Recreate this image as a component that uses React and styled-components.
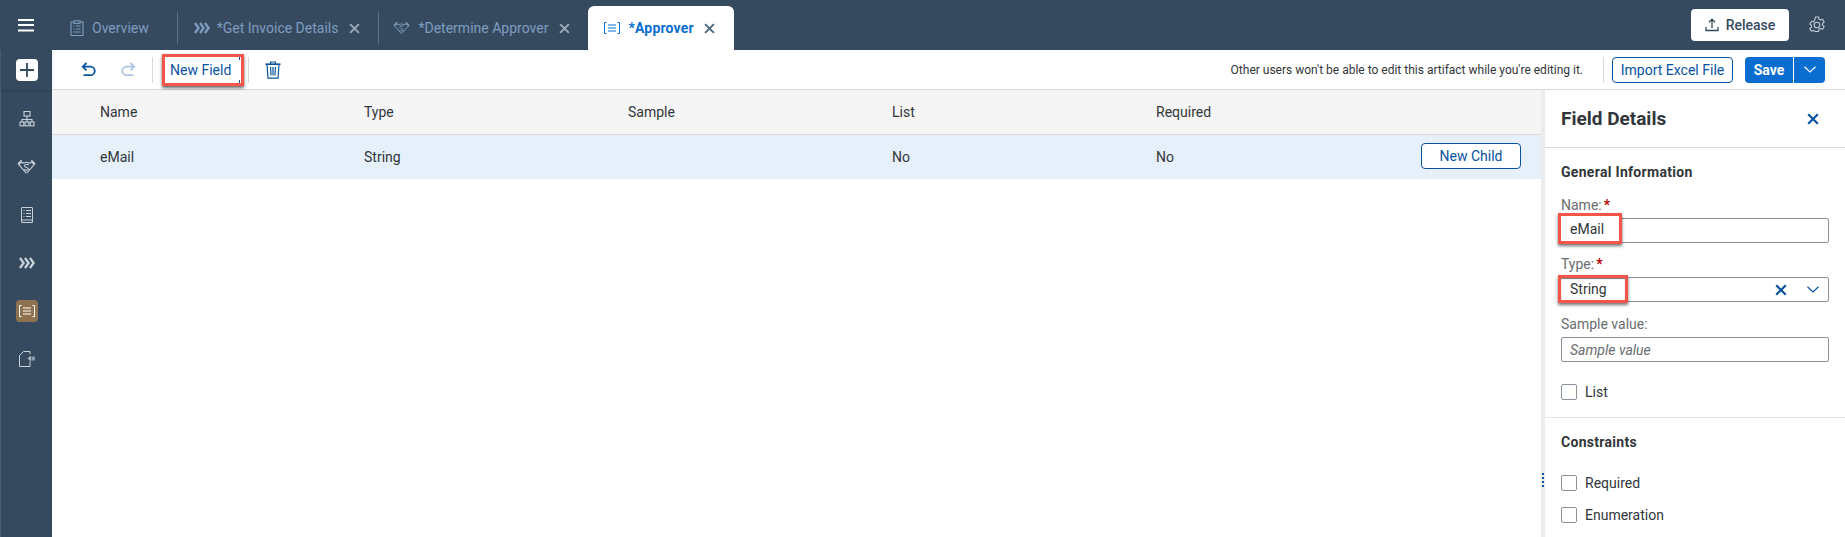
import React from 'react'
import styled, { createGlobalStyle } from 'styled-components'

const GlobalStyle = createGlobalStyle`
  html, body {
    margin: 0;
    padding: 0;
    background: #fff;
    font-family: "Roboto", "Liberation Sans", sans-serif;
  }
`

const HierarchyIcon = () => (
  <svg width="16" height="16" viewBox="0 0 16 16" fill="none" stroke="currentColor" strokeWidth="1.1">
    <rect x="5" y="0.5" width="6" height="4.5" />
    <path d="M8 5v3.5M3 11V8.5h10V11M8 8.5V11" />
    <rect x="1" y="11" width="3.8" height="3.8" />
    <rect x="6.1" y="11" width="3.8" height="3.8" />
    <rect x="11.2" y="11" width="3.8" height="3.8" />
  </svg>
)

const HandshakeIcon = ({ size = 19 }) => (
  <svg width={size} height={size * 0.8} viewBox="0 0 20 16" fill="none" stroke="currentColor" strokeWidth="1.1">
    <path d="M1 5.5L5 1.5M19 5.5L15 1.5" strokeWidth="1.8" />
    <path d="M4 3.5C6 5 8 3.5 10 3.5S14 5 16 3.5L18 6l-7 8q-1 1-2 0L2 6z" />
    <path d="M12.5 6.5C11 5 7.5 5.5 8 7.5S12 8.5 12 10.5c0 1.5-3 1.5-4.5.5" />
  </svg>
)

const ListDocIcon = () => (
  <svg width="16" height="16" viewBox="0 0 16 16" fill="none" stroke="currentColor" strokeWidth="1">
    <rect x="2.5" y="0.5" width="11" height="15" rx="0.5" />
    <path d="M4.5 3.5h1M7 3.5h5M4.5 6.5h1M7 6.5h5M4.5 9.5h1M7 9.5h5" />
    <path d="M2.5 13h11" />
  </svg>
)

const ChevronsIcon = ({ size = 16 }) => (
  <svg width={size} height={size} viewBox="0 0 16 16" fill="none" stroke="currentColor" strokeWidth="2.3">
    <path d="M1 3l3.6 5L1 13M6 3l3.6 5L6 13M11 3l3.6 5L11 13" />
  </svg>
)

const BracketListIcon = ({ size = 16 }) => (
  <svg width={size} height={size} viewBox="0 0 16 16" fill="none" stroke="currentColor" strokeWidth="1">
    <path d="M2.5 2.5h-2v11h2M13.5 2.5h2v11h-2M4 5h8M4 8h8M4 11h8" />
  </svg>
)

const ImportDocIcon = () => (
  <svg width="16" height="16" viewBox="0 0 16 16" fill="none" stroke="currentColor" strokeWidth="1">
    <path d="M11 10.5v5H0.5V4.5L4.5 0.5H11v2.5" />
    <path d="M8.5 7.5L12 4.5v6z" fill="currentColor" stroke="none" opacity="0.8" />
    <path d="M12.5 5.5h3.5v4h-3.5z" fill="currentColor" stroke="none" opacity="0.6" />
  </svg>
)

const ClipboardIcon = () => (
  <svg width="14" height="16" viewBox="0 0 14 16" fill="none" stroke="currentColor" strokeWidth="1.1">
    <path d="M4 2H1v13.5h12V2h-3" />
    <rect x="4" y="0.8" width="6" height="2.6" />
    <path d="M3.5 6h1M6 6h4.5M3.5 9h1M6 9h4.5M3.5 12h7" />
  </svg>
)

const CloseIcon = ({ size = 12, weight = 2.2 }) => (
  <svg width={size} height={size} viewBox="0 0 12 12" fill="none" stroke="currentColor" strokeWidth={weight}>
    <path d="M1.2 1.2l9.6 9.6M10.8 1.2l-9.6 9.6" />
  </svg>
)

const UndoIcon = () => (
  <svg width="15" height="15" viewBox="0 0 15 15" fill="none" stroke="currentColor" strokeWidth="1.8">
    <path d="M5.5 1L1.8 4.7l3.7 3.7" />
    <path d="M2 4.7h7.5a4.2 4.2 0 0 1 0 8.5H2.5" />
  </svg>
)

const RedoIcon = () => (
  <svg width="15" height="15" viewBox="0 0 15 15" fill="none" stroke="currentColor" strokeWidth="1.8">
    <path d="M9.5 1l3.7 3.7-3.7 3.7" />
    <path d="M13 4.7H5.5a4.2 4.2 0 0 0 0 8.5h7" />
  </svg>
)

const TrashIcon = () => (
  <svg width="16" height="18" viewBox="0 0 16 18" fill="none" stroke="currentColor" strokeWidth="1.2">
    <path d="M0.5 3.2h15" strokeWidth="1.6" />
    <path d="M5.5 3V1h5v2" />
    <path d="M2 3.5l1 13.7h10l1-13.7" />
    <path d="M5.6 6l.4 8.5M8 6v8.5M10.4 6L10 14.5" />
  </svg>
)

const UploadIcon = () => (
  <svg width="14" height="14" viewBox="0 0 14 14" fill="none" stroke="currentColor" strokeWidth="1.3">
    <path d="M7 10V1.5M4 4.2L7 1.2l3 3" />
    <path d="M1 9v3.5h12V9" />
  </svg>
)

const GearIcon = () => (
  <svg width="18" height="18" viewBox="0 0 18 18" fill="none" stroke="currentColor" strokeWidth="1.1">
    <path d="M7.4 1h3.2l.4 2.2 1.5.8 2.1-.8 1.6 2.8-1.7 1.4v1.7l1.7 1.4-1.6 2.8-2.1-.8-1.5.8-.4 2.2H7.4L7 15.3l-1.5-.8-2.1.8-1.6-2.8 1.7-1.4V9.4L1.8 8 3.4 5.2l2.1.8L7 3.2z" strokeLinejoin="round" />
    <circle cx="9" cy="9" r="2.8" />
  </svg>
)

const HamburgerIcon = () => (
  <svg width="16" height="13" viewBox="0 0 16 13" fill="#fff">
    <rect width="16" height="2" y="0" />
    <rect width="16" height="2" y="5" />
    <rect width="16" height="2" y="10.5" />
  </svg>
)

const PlusIcon = () => (
  <svg width="14" height="14" viewBox="0 0 14 14" fill="none" stroke="#354a5f" strokeWidth="1.8">
    <path d="M7 0v14M0 7h14" />
  </svg>
)

const ChevronDown = ({ width = 12 }) => (
  <svg width={width} height="7" viewBox="0 0 12 7" fill="none" stroke="currentColor" strokeWidth="1.2">
    <path d="M0.5 0.8L6 6l5.5-5.2" />
  </svg>
)

const tabs = [
  { label: 'Overview', icon: <ClipboardIcon />, closable: false, left: 18, gap: 8, pad: 28, sep: true },
  { label: '*Get Invoice Details', icon: <ChevronsIcon />, closable: true, left: 16, gap: 7, pad: 18, sep: true },
  { label: '*Determine Approver', icon: <HandshakeIcon size={17} />, closable: true, left: 14, gap: 8, pad: 18, sep: false }
]

const columns = ['Name', 'Type', 'Sample', 'List', 'Required']
const cells = ['eMail', 'String', '', 'No', 'No']

const App = () => (
  <>
    <GlobalStyle />
    <Page>
      <TopBar>
        <MenuButton><HamburgerIcon /></MenuButton>
        <TabStrip>
          {tabs.map(tab => (
            <Tab key={tab.label} $left={tab.left} $pad={tab.pad} $sep={tab.sep}>
              <TabIcon>{tab.icon}</TabIcon>
              <TabLabel $gap={tab.gap}>{tab.label}</TabLabel>
              {tab.closable && <TabClose><CloseIcon size={11} /></TabClose>}
            </Tab>
          ))}
          <ActiveTab>
            <ActiveIcon><BracketListIcon /></ActiveIcon>
            <ActiveLabel>*Approver</ActiveLabel>
            <ActiveClose><CloseIcon size={11} /></ActiveClose>
          </ActiveTab>
        </TabStrip>
        <ReleaseButton><UploadIcon />Release</ReleaseButton>
        <SettingsButton><GearIcon /></SettingsButton>
      </TopBar>
      <Body>
        <SideNav>
          <AddRow>
            <AddButton><PlusIcon /></AddButton>
          </AddRow>
          <NavList>
            <NavItem><HierarchyIcon /></NavItem>
            <NavItem><HandshakeIcon /></NavItem>
            <NavItem><ListDocIcon /></NavItem>
            <NavItem><ChevronsIcon /></NavItem>
            <NavItem $active><BracketListIcon /></NavItem>
            <NavItem><ImportDocIcon /></NavItem>
          </NavList>
        </SideNav>
        <Main>
          <Toolbar>
            <ToolIcon $color="#0854a0"><UndoIcon /></ToolIcon>
            <ToolIcon $color="#a9c5e2"><RedoIcon /></ToolIcon>
            <ToolSep $left={4} $right={9} />
            <NewFieldButton>New Field</NewFieldButton>
            <ToolSep $left={4} $right={4} />
            <ToolIcon $color="#0854a0"><TrashIcon /></ToolIcon>
            <Spacer />
            <Notice>Other users won't be able to edit this artifact while you're editing it.</Notice>
            <ToolSep $left={20} $right={8} />
            <OutlineButton>Import Excel File</OutlineButton>
            <SplitButton>
              <SaveButton>Save</SaveButton>
              <SaveArrow><ChevronDown /></SaveArrow>
            </SplitButton>
          </Toolbar>
          <Content>
            <TablePane>
              <TableHead>
                {columns.map(c => <Cell key={c}>{c}</Cell>)}
              </TableHead>
              <TableRow>
                {cells.map((c, i) => <Cell key={i}>{c}</Cell>)}
                <RowAction>New Child</RowAction>
              </TableRow>
            </TablePane>
            <Splitter>
              <SplitterDots />
            </Splitter>
            <Panel>
              <PanelHeader>
                <PanelTitle>Field Details</PanelTitle>
                <PanelClose><CloseIcon size={12} /></PanelClose>
              </PanelHeader>
              <Section>
                <SectionTitle>General Information</SectionTitle>
                <FieldLabel $top={16}>Name:<Req>*</Req></FieldLabel>
                <InputBox>
                  <Callout $width={64} $top={-6} $height={31}>eMail</Callout>
                </InputBox>
                <FieldLabel $top={13}>Type:<Req>*</Req></FieldLabel>
                <InputBox>
                  <Callout $width={70} $top={-3} $height={28} $inset>String</Callout>
                  <ClearMark><CloseIcon size={12} /></ClearMark>
                  <SelectArrow><ChevronDown /></SelectArrow>
                </InputBox>
                <FieldLabel $top={14}>Sample value:</FieldLabel>
                <InputBox>
                  <Placeholder>Sample value</Placeholder>
                </InputBox>
                <CheckRow $top={22}>
                  <CheckBox />
                  <CheckText>List</CheckText>
                </CheckRow>
              </Section>
              <SectionLower>
                <SectionTitle>Constraints</SectionTitle>
                <CheckRow $top={24}>
                  <CheckBox />
                  <CheckText>Required</CheckText>
                </CheckRow>
                <CheckRow $top={16}>
                  <CheckBox />
                  <CheckText>Enumeration</CheckText>
                </CheckRow>
              </SectionLower>
            </Panel>
          </Content>
        </Main>
      </Body>
    </Page>
  </>
)

export default App

const Page = styled.div`
  width: 1845px;
  height: 537px;
  overflow: hidden;
  display: flex;
  flex-direction: column;
  background: #fff;
  color: #32363a;
`

const TopBar = styled.div`
  height: 50px;
  flex: none;
  display: flex;
  align-items: flex-end;
  background: #354a5f;
`

const MenuButton = styled.div`
  width: 52px;
  height: 50px;
  flex: none;
  display: flex;
  align-items: center;
  justify-content: center;
`

const TabStrip = styled.div`
  flex: 1;
  display: flex;
  align-items: flex-end;
  height: 50px;
`

const Tab = styled.div`
  display: flex;
  align-items: center;
  height: 32px;
  margin-bottom: 6px;
  padding-left: ${p => p.$left}px;
  padding-right: ${p => p.$pad}px;
  border-right: ${p => (p.$sep ? '1px solid #5d7189' : '0')};
  color: #7f9dc0;
  font-size: 14px;
`

const TabIcon = styled.span`
  display: flex;
  color: #7f9dc0;
`

const TabLabel = styled.span`
  margin-left: ${p => p.$gap}px;
  white-space: nowrap;
`

const TabClose = styled.span`
  display: flex;
  margin-left: 11px;
  color: #9aa8b8;
`

const ActiveTab = styled.div`
  display: flex;
  align-items: center;
  height: 44px;
  padding: 0 19px 0 16px;
  background: #fff;
  border-radius: 6px 6px 0 0;
`

const ActiveIcon = styled.span`
  display: flex;
  color: #0a6ed1;
`

const ActiveLabel = styled.span`
  margin-left: 8px;
  font-size: 14px;
  font-weight: 700;
  letter-spacing: 0.2px;
  color: #0a6ed1;
`

const ActiveClose = styled.span`
  display: flex;
  margin-left: 10px;
  color: #4f6a85;
`

const ReleaseButton = styled.div`
  align-self: center;
  display: flex;
  align-items: center;
  justify-content: center;
  gap: 7px;
  width: 98px;
  height: 32px;
  margin-right: 19px;
  border-radius: 4px;
  background: #fff;
  color: #354a5f;
  font-size: 14px;
  font-weight: 500;
`

const SettingsButton = styled.div`
  align-self: center;
  display: flex;
  width: 18px;
  margin-right: 19px;
  color: #c3ccd6;
`

const Body = styled.div`
  flex: 1;
  min-height: 0;
  display: flex;
`

const SideNav = styled.div`
  width: 52px;
  flex: none;
  display: flex;
  flex-direction: column;
  background: #354a5f;
  border-left: 1px solid #4a5e73;
  box-sizing: border-box;
`

const AddRow = styled.div`
  height: 40px;
  flex: none;
  display: flex;
  justify-content: center;
  align-items: flex-start;
  box-shadow: 0 1px 2px rgba(0, 0, 0, 0.18);
`

const AddButton = styled.div`
  width: 22px;
  height: 22px;
  margin-top: 9px;
  display: flex;
  align-items: center;
  justify-content: center;
  background: #fff;
  border-radius: 4px;
`

const NavList = styled.div`
  margin-top: 18px;
  display: flex;
  flex-direction: column;
  align-items: center;
  gap: 26px;
`

const NavItem = styled.div`
  width: 22px;
  height: 22px;
  display: flex;
  align-items: center;
  justify-content: center;
  border-radius: 4px;
  color: ${p => (p.$active ? '#fff' : '#c9d1da')};
  background: ${p => (p.$active ? '#8f7350' : 'transparent')};
`

const Main = styled.div`
  flex: 1;
  min-width: 0;
  display: flex;
  flex-direction: column;
`

const Toolbar = styled.div`
  height: 39px;
  flex: none;
  display: flex;
  align-items: center;
  padding: 0 20px 0 16px;
  border-bottom: 1px solid #d9d9d9;
`

const ToolIcon = styled.div`
  width: 40px;
  display: flex;
  justify-content: center;
  color: ${p => p.$color};
`

const ToolSep = styled.div`
  width: 1px;
  height: 26px;
  background: #d9d9d9;
  margin-left: ${p => p.$left}px;
  margin-right: ${p => p.$right}px;
`

const NewFieldButton = styled.div`
  position: relative;
  box-sizing: border-box;
  width: 82px;
  height: 32px;
  display: flex;
  align-items: center;
  padding-left: 5px;
  border: 3px solid #f4554a;
  background: #fff;
  color: #0854a0;
  font-size: 14px;
  box-shadow: 0 2px 3px rgba(0, 0, 0, 0.6);
  &::after {
    content: '';
    position: absolute;
    top: 0;
    bottom: 0;
    right: 1px;
    width: 1px;
    background: linear-gradient(#0854a0 0 3px, transparent 3px calc(100% - 3px), #0854a0 calc(100% - 3px));
  }
`

const Spacer = styled.div`
  flex: 1;
`

const Notice = styled.div`
  font-size: 12px;
  color: #32363a;
  white-space: nowrap;
`

const OutlineButton = styled.div`
  box-sizing: border-box;
  width: 121px;
  height: 26px;
  display: flex;
  align-items: center;
  justify-content: center;
  border: 1px solid #0854a0;
  border-radius: 4px;
  color: #0854a0;
  font-size: 14px;
`

const SplitButton = styled.div`
  display: flex;
  height: 26px;
  margin-left: 12px;
  border-radius: 4px;
  overflow: hidden;
  background: #0a6ed1;
  color: #fff;
`

const SaveButton = styled.div`
  width: 48px;
  display: flex;
  align-items: center;
  justify-content: center;
  font-size: 14px;
  font-weight: 700;
  border-right: 1px solid #fff;
`

const SaveArrow = styled.div`
  width: 31px;
  display: flex;
  align-items: center;
  justify-content: center;
`

const Content = styled.div`
  flex: 1;
  min-height: 0;
  display: flex;
`

const TablePane = styled.div`
  flex: 1;
  min-width: 0;
`

const TableHead = styled.div`
  height: 44px;
  display: grid;
  grid-template-columns: repeat(5, 264px);
  align-items: center;
  padding-left: 48px;
  background: #f5f5f5;
  border-bottom: 1px solid #d9d9d9;
`

const TableRow = styled.div`
  position: relative;
  height: 44px;
  display: grid;
  grid-template-columns: repeat(5, 264px);
  align-items: center;
  padding-left: 48px;
  background: #e5f0fa;
`

const Cell = styled.div`
  font-size: 14px;
  color: #32363a;
`

const RowAction = styled.div`
  position: absolute;
  right: 20px;
  top: 8px;
  box-sizing: border-box;
  width: 100px;
  height: 26px;
  display: flex;
  align-items: center;
  justify-content: center;
  background: #fff;
  border: 1px solid #0854a0;
  border-radius: 4px;
  color: #0854a0;
  font-size: 14px;
`

const Splitter = styled.div`
  position: relative;
  width: 4px;
  flex: none;
  background: #eaecee;
`

const SplitterDots = styled.div`
  position: absolute;
  left: 1px;
  top: 383px;
  width: 2px;
  height: 14px;
  background: repeating-linear-gradient(to bottom, #0854a0 0 2px, transparent 2px 4px);
`

const Panel = styled.div`
  width: 300px;
  flex: none;
`

const PanelHeader = styled.div`
  height: 57px;
  display: flex;
  align-items: center;
  justify-content: space-between;
  padding: 0 26px 0 16px;
  border-bottom: 1px solid #d9d9d9;
`

const PanelTitle = styled.div`
  font-size: 19px;
  font-weight: 700;
  color: #32363a;
`

const PanelClose = styled.div`
  display: flex;
  color: #0854a0;
`

const Section = styled.div`
  padding: 15px 16px 0 16px;
  height: 270px;
  box-sizing: border-box;
  border-bottom: 1px solid #e5e5e5;
`

const SectionLower = styled.div`
  padding: 15px 16px 0 16px;
`

const SectionTitle = styled.div`
  font-size: 14px;
  line-height: 18px;
  font-weight: 700;
  letter-spacing: 0.3px;
  color: #32363a;
`

const FieldLabel = styled.div`
  margin-top: ${p => p.$top}px;
  margin-bottom: 5px;
  font-size: 14px;
  line-height: 16px;
  color: #6a6d70;
`

const Req = styled.span`
  margin-left: 2px;
  color: #bb0000;
  font-weight: 700;
`

const InputBox = styled.div`
  position: relative;
  box-sizing: border-box;
  height: 25px;
  display: flex;
  align-items: center;
  padding-left: 8px;
  background: #fff;
  border: 1px solid #89919a;
  border-radius: 2px;
  font-size: 14px;
`

const Callout = styled.div`
  position: absolute;
  left: -4px;
  top: ${p => p.$top}px;
  box-sizing: border-box;
  width: ${p => p.$width}px;
  height: ${p => p.$height}px;
  display: flex;
  align-items: center;
  padding-left: 9px;
  background: #fff;
  border: 3px solid #f4554a;
  color: #32363a;
  box-shadow: 0 2px 3px rgba(0, 0, 0, 0.55) ${p => (p.$inset ? ', inset 0 1px 1px rgba(0, 0, 0, 0.55)' : '')};
`

const ClearMark = styled.span`
  position: absolute;
  right: 41px;
  top: 6px;
  display: flex;
  color: #0854a0;
`

const SelectArrow = styled.span`
  position: absolute;
  right: 9px;
  top: 8px;
  display: flex;
  color: #0854a0;
`

const Placeholder = styled.span`
  font-style: italic;
  color: #6a6d70;
`

const CheckRow = styled.div`
  margin-top: ${p => p.$top}px;
  display: flex;
  align-items: center;
  gap: 8px;
`

const CheckBox = styled.div`
  box-sizing: border-box;
  width: 16px;
  height: 16px;
  background: #fff;
  border: 1px solid #89919a;
  border-radius: 2px;
`

const CheckText = styled.div`
  font-size: 14px;
  line-height: 16px;
  color: #32363a;
`
